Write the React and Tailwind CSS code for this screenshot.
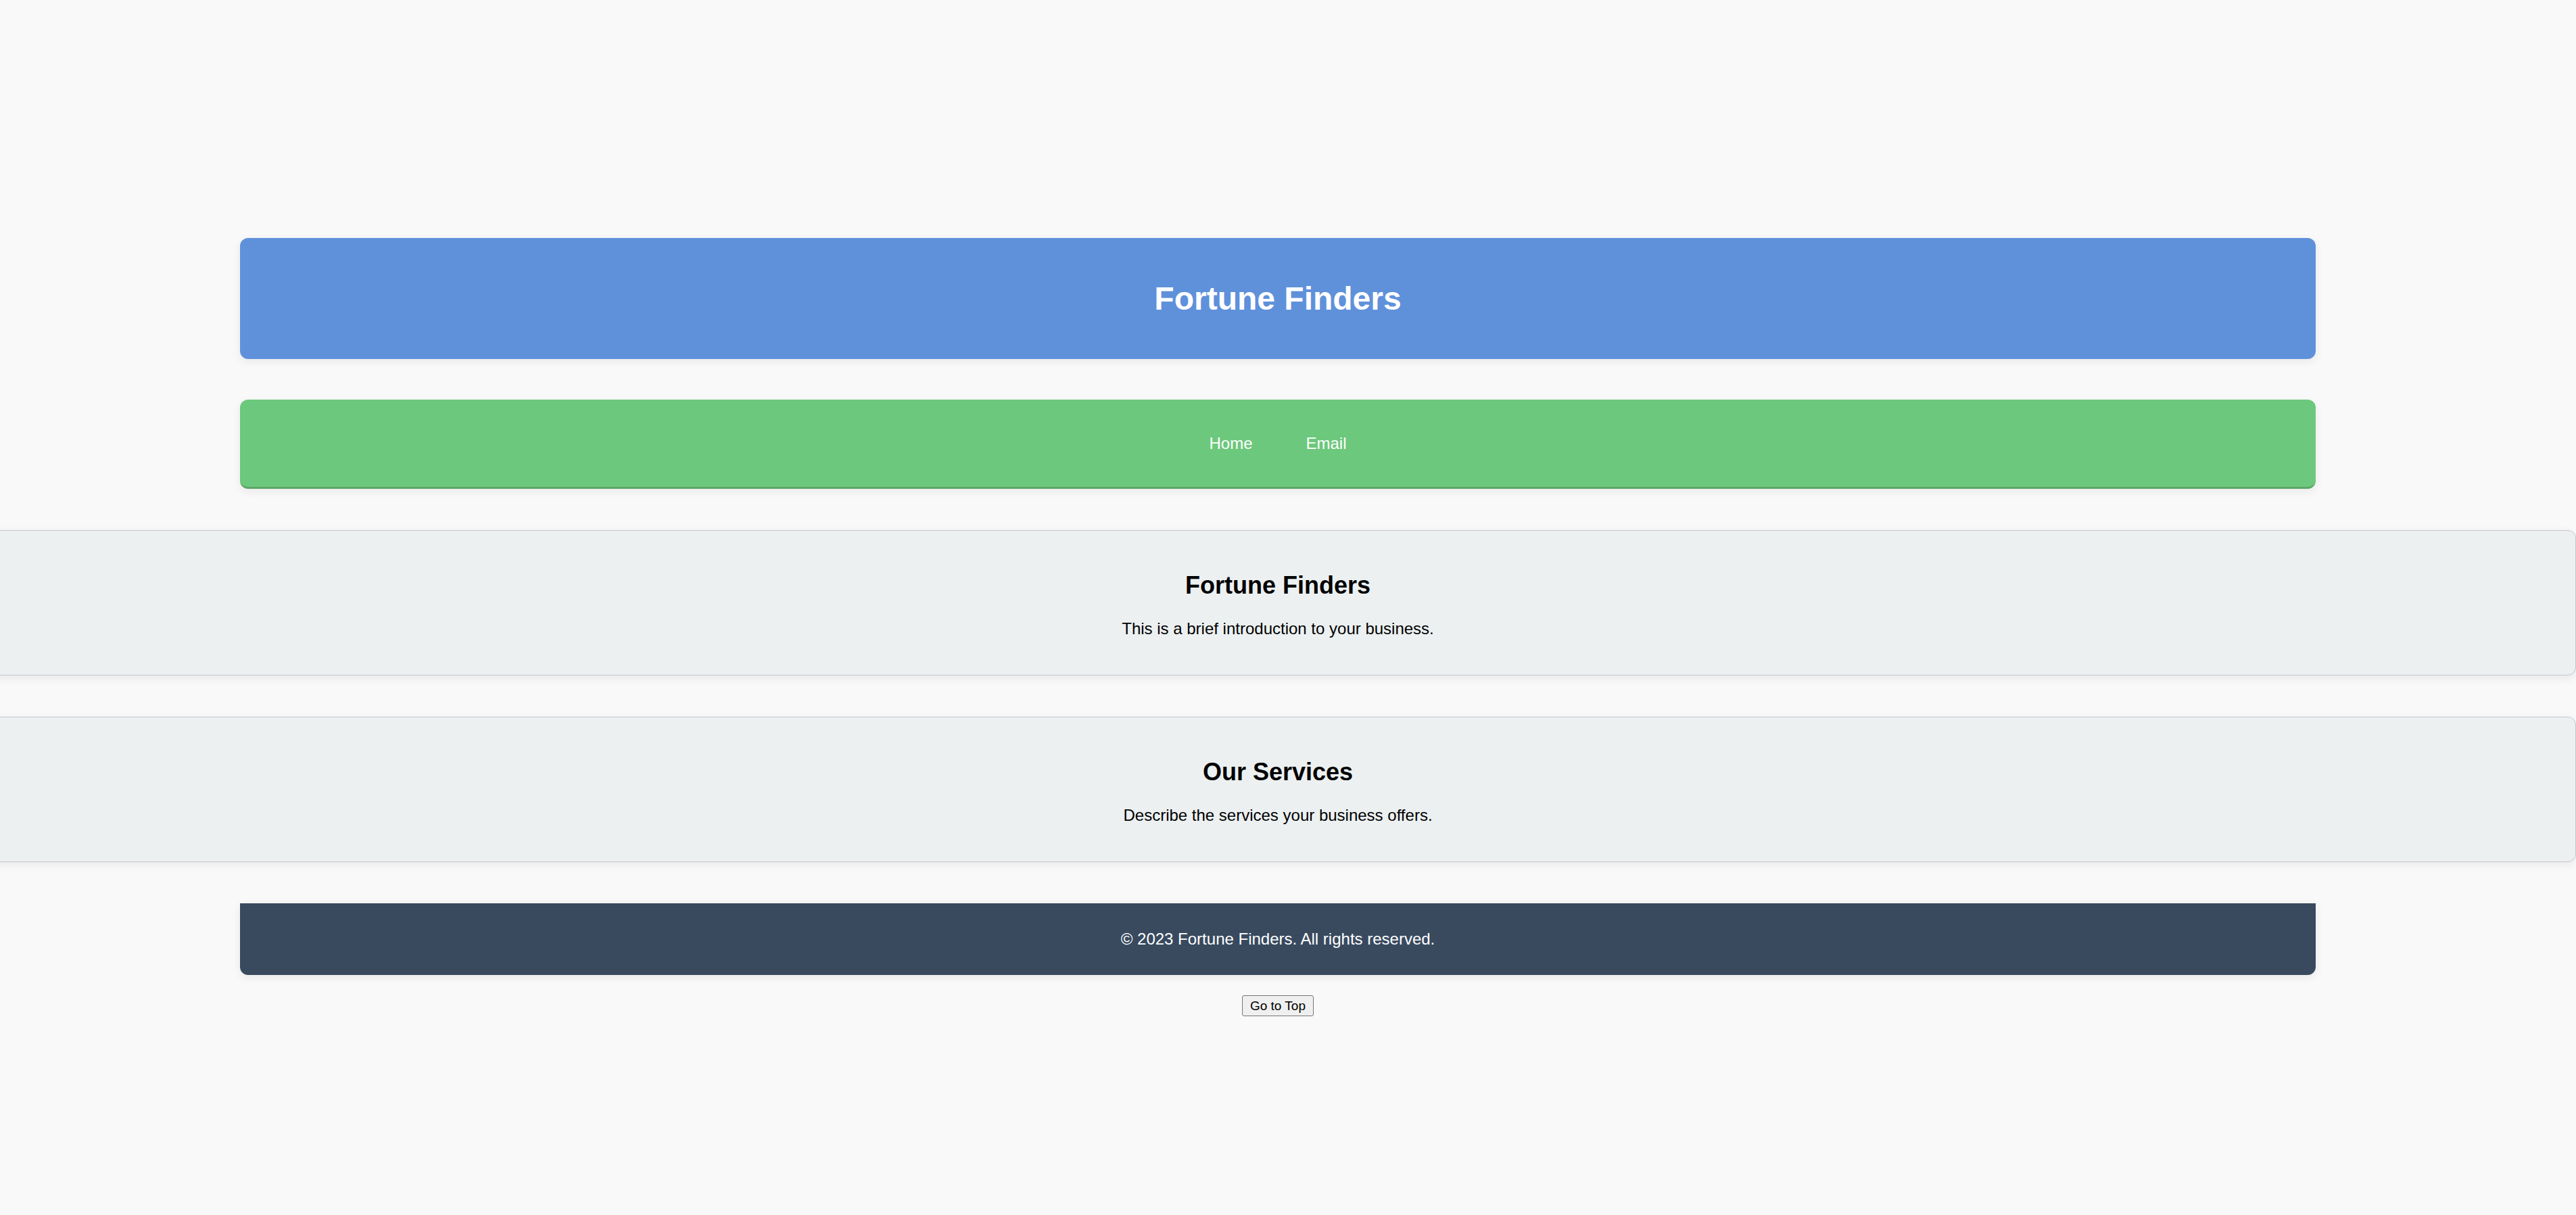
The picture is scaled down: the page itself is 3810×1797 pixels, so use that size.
const LINKS = ['Home', 'Email']

const SECTIONS = [
  { title: 'Fortune Finders', body: 'This is a brief introduction to your business.' },
  { title: 'Our Services', body: 'Describe the services your business offers.' },
]

export default function App() {
  return (
    <div className="min-h-[1797px] w-full overflow-hidden bg-[#f9f9f9]">
      <div className="w-[3780px] pt-[352px] font-['Liberation_Sans',Arial,sans-serif] text-black">
        <header className="mx-[355px] rounded-[12px] bg-[#5f91db] px-[30px] py-[30px] text-center shadow-[0_4px_14px_rgba(0,0,0,0.07)]">
          <h1 className="my-[32px] text-[48px] font-bold leading-[55px] text-white">Fortune Finders</h1>
        </header>

        <nav className="mx-[355px] mt-[60px] flex h-[132px] items-center justify-center gap-[79px] rounded-[12px] border-b-[3px] border-[#5ca867] bg-[#6cc87c] shadow-[0_4px_14px_rgba(0,0,0,0.07)]">
          {LINKS.map((l) => (
            <a key={l} href="#" className="text-[24px] leading-[28px] text-white">
              {l}
            </a>
          ))}
        </nav>

        {SECTIONS.map((s) => (
          <section
            key={s.title}
            className="ml-[-30px] mt-[61px] w-[3840px] rounded-[12px] border border-[#c4c8cc] bg-[#ecf0f1] p-[30px] text-center shadow-[0_4px_14px_rgba(0,0,0,0.07)]"
          >
            <h2 className="mt-[30px] text-[36px] font-bold leading-[41px]">{s.title}</h2>
            <p className="mb-[24px] mt-[30px] text-[24px] leading-[28px]">{s.body}</p>
          </section>
        ))}

        <footer className="mx-[355px] mt-[61px] rounded-b-[12px] bg-[#394a5f] px-[30px] py-[15px] text-center shadow-[0_4px_14px_rgba(0,0,0,0.07)]">
          <p className="my-[24px] text-[24px] leading-[28px] text-white">© 2023 Fortune Finders. All rights reserved.</p>
        </footer>

        <div className="mt-[30px] flex justify-center">
          <button className="rounded-[3px] border border-[#767676] bg-[#efefef] px-[11px] py-[3px] text-[19px] leading-[23px] text-black">
            Go to Top
          </button>
        </div>
      </div>
    </div>
  )
}
